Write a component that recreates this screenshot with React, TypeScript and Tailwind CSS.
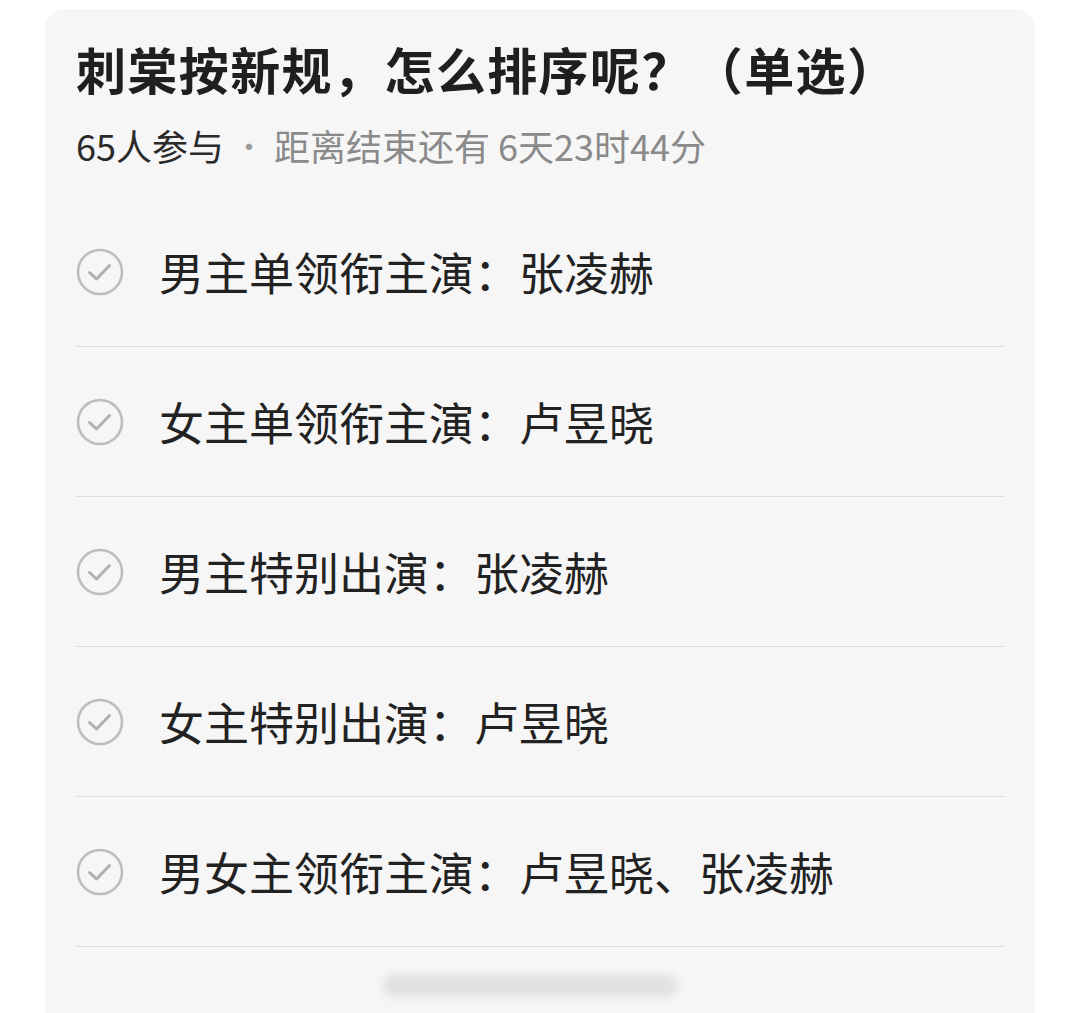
import React from "react";

const options = [
  "男主单领衔主演：张凌赫",
  "女主单领衔主演：卢昱晓",
  "男主特别出演：张凌赫",
  "女主特别出演：卢昱晓",
  "男女主领衔主演：卢昱晓、张凌赫",
];

function CheckCircle() {
  return (
    <svg width="48" height="48" viewBox="0 0 48 48" fill="none" className="shrink-0">
      <circle cx="24" cy="24" r="22" stroke="#bdbdbd" strokeWidth="2.6" />
      <path d="M13.5 24.5 L20.5 31 L33.5 17.5" stroke="#b0b0b0" strokeWidth="3" strokeLinecap="round" strokeLinejoin="round" />
    </svg>
  );
}

export default function App() {
  return (
    <div
      className="w-[1067px] h-[1013px] overflow-hidden bg-white pt-[9px] pl-[45px]"
      style={{ fontFamily: '"Noto Sans CJK SC", "Noto Sans", sans-serif' }}
    >
      <div className="w-[990px] h-[1020px] rounded-[20px] bg-[#f6f6f6] pl-[31px] pr-[30px]">
        <div className="pt-[31px] text-[50px] leading-[56px] font-bold text-[#1f1f1f] tracking-[1.4px] whitespace-nowrap">
          刺棠按新规，怎么排序呢？（单选）
        </div>
        <div className="mt-[27px] text-[36px] leading-[44px] text-[#2a2a2a] flex items-center whitespace-nowrap">
          <span>65人参与</span>
          <span className="text-[#9a9a9a] ml-[10px] text-[30px]">·</span>
          <span className="text-[#8a8a8a] ml-[10px]">距离结束还有 6天23时44分</span>
        </div>
        <div className="mt-[30px]">
          {options.map((o, i) => (
            <div key={i} className="h-[150px] flex items-center border-b-[1.5px] border-[#dedede]">
              <CheckCircle />
              <span className="ml-[35px] text-[45px] leading-[52px] text-[#222222] whitespace-nowrap">{o}</span>
            </div>
          ))}
        </div>
        <div className="flex justify-center mt-[28px]">
          <div className="ml-[-20px] w-[295px] h-[22px] rounded-full bg-[#dcdcdc] blur-[4px] opacity-80" />
        </div>
      </div>
    </div>
  );
}
